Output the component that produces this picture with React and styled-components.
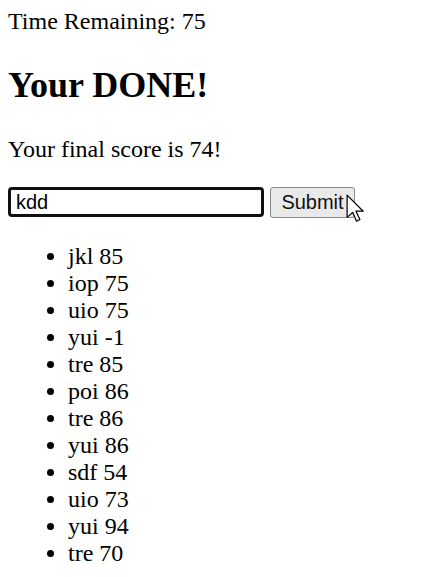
import React from 'react';
import styled, { createGlobalStyle } from 'styled-components';

var GlobalStyle = createGlobalStyle`
    body {
        margin: 8px;
        font-family: "Liberation Serif", "Times New Roman", serif;
        font-size: 24px;
        color: #000;
        background: #fff;
    }
`

var Timer = styled.div`
    line-height: 27px;
`

var Title = styled.h2`
    font-size: 36px;
    font-weight: bold;
    margin: 30px 0;
    line-height: 41px;
`

var Score = styled.p`
    margin: 24px 0;
    line-height: 27px;
`

var Form = styled.form`
    display: flex;
    align-items: center;
    gap: 6px;
    height: 30px;
`

var NameInput = styled.input`
    box-sizing: border-box;
    width: 256px;
    height: 30px;
    padding: 0 5px;
    font-family: "Liberation Sans", Arial, sans-serif;
    font-size: 20px;
    color: #000;
    border: 3px solid #101010;
    border-radius: 4px;
    outline: none;
`

var ButtonWrap = styled.div`
    position: relative;
`

var SubmitButton = styled.button`
    box-sizing: border-box;
    width: 85px;
    height: 31px;
    padding: 0 5px;
    font-family: "Liberation Sans", Arial, sans-serif;
    font-size: 20px;
    color: #111;
    background: #e9e9e9;
    border: 1px solid #8a8a8a;
    border-radius: 3px;
`

var Cursor = styled.svg`
    position: absolute;
    left: 76px;
    top: 7px;
`

var ScoreList = styled.ul`
    margin: 26px 0 0;
    padding-left: 60px;
    line-height: 27px;
`

var scores = [
    ['jkl', 85], ['iop', 75], ['uio', 75], ['yui', -1], ['tre', 85], ['poi', 86],
    ['tre', 86], ['yui', 86], ['sdf', 54], ['uio', 73], ['yui', 94], ['tre', 70]
]

var App = () => {
    return (
        <div>
            <GlobalStyle />
            <Timer>Time Remaining: 75</Timer>
            <Title>Your DONE!</Title>
            <Score>Your final score is 74!</Score>
            <Form onSubmit={e => e.preventDefault()}>
                <NameInput defaultValue="kdd" />
                <ButtonWrap>
                    <SubmitButton type="submit">Submit</SubmitButton>
                    <Cursor width="20" height="30" viewBox="0 0 18 27">
                        <path d="M1 1 L1 21 L6 16.5 L9.5 24.5 L12.5 23 L9 15.5 L15.5 15.5 Z" fill="#fff" stroke="#000" strokeWidth="1.1" strokeLinejoin="round" />
                    </Cursor>
                </ButtonWrap>
            </Form>
            <ScoreList>
                {scores.map((s, i) => <li key={i}>{s[0]} {s[1]}</li>)}
            </ScoreList>
        </div>
    )
}

export default App;
